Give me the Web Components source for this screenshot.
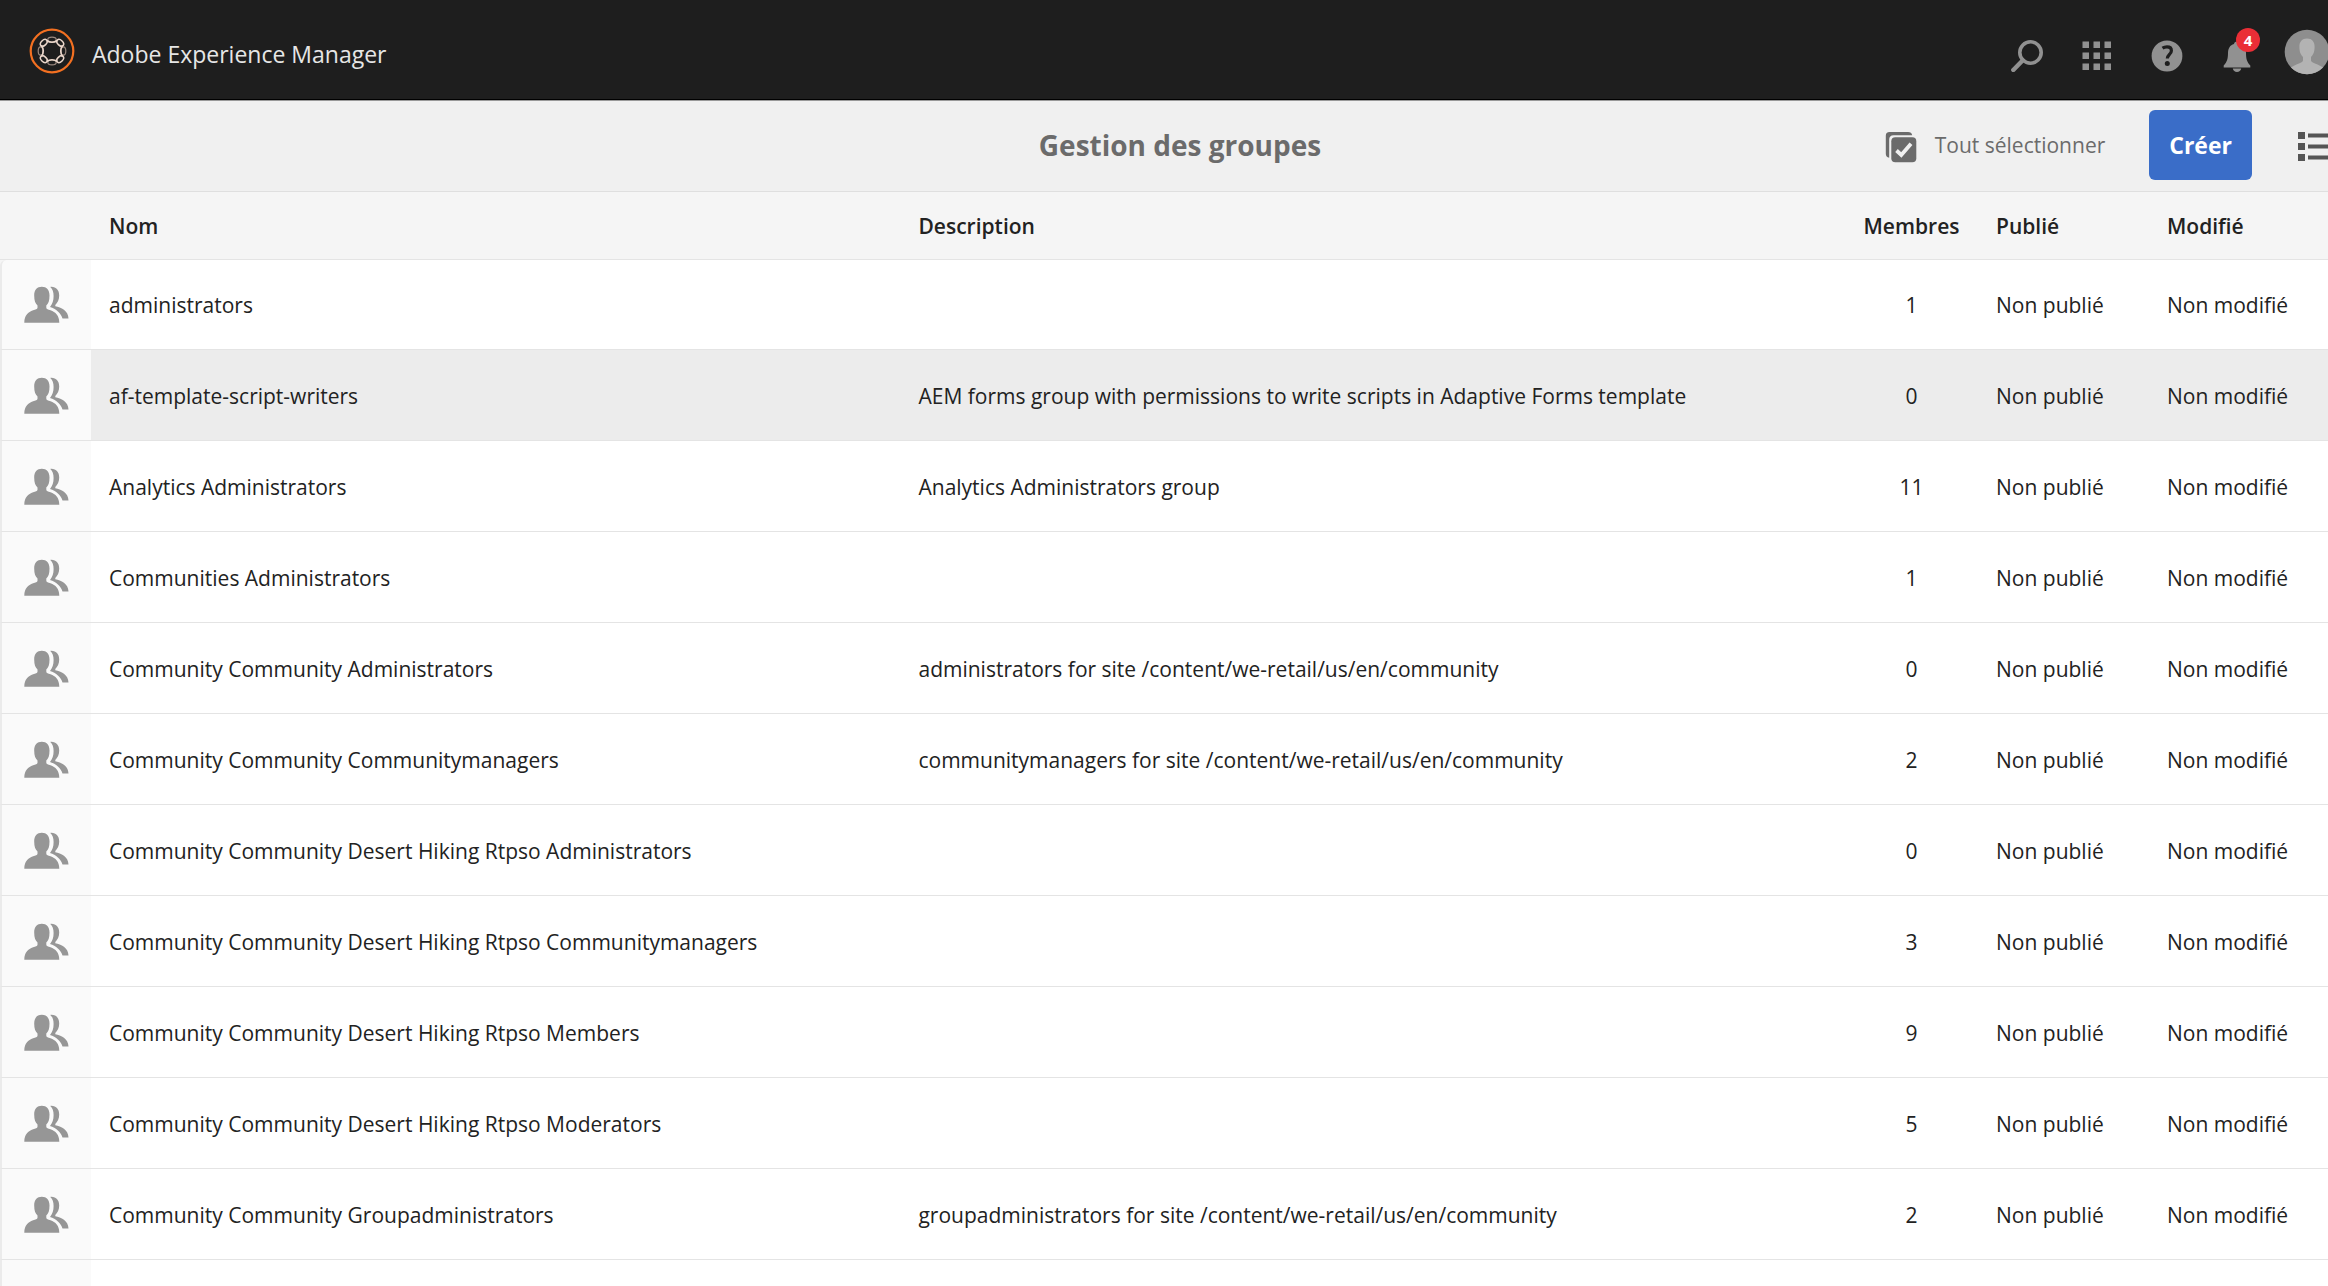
<!DOCTYPE html>
<html lang="fr">
<head>
<meta charset="utf-8">
<title>Gestion des groupes</title>
<style>
html, body { margin: 0; height: 100%; overflow: hidden; background: #fff; }
body { font-family: "Open Sans", "Noto Sans", sans-serif; font-size: 21px; color: #222; }
</style>
</head>
<body>
<aem-console></aem-console>
<script>
const define = (name, html, setup) => {
  const tpl = document.createElement('template');
  tpl.innerHTML = html;
  customElements.define(name, class extends HTMLElement {
    constructor() {
      super();
      this.attachShadow({ mode: 'open' }).append(tpl.content.cloneNode(true));
    }
    connectedCallback() {
      if (setup && !this.ready) { this.ready = true; setup(this.shadowRoot, this); }
    }
  });
};

const ring = Array.from({ length: 4 }, (_, i) => `<g transform="rotate(${i * 90} 24 24)">
<ellipse cx="24" cy="12.6" rx="4.2" ry="2.4" stroke="#9c8a80" stroke-width="1.2"/>
<ellipse cx="32.200" cy="15.800" rx="4" ry="2.600" transform="rotate(45 32.2 15.8)" stroke="#ead6ca" stroke-width="1.5"/>
<path d="M18.500 13.500Q24 17 29.500 13.500" stroke="#ead6ca" stroke-width="1.600"/></g>`).join('');

const icons = {
  logo: [48, 48, `<g fill="none"><circle cx="24" cy="24" r="21.3" stroke="#f37021" stroke-width="2.2"/>${ring}</g>`],
  search: [32, 32, `<g fill="none" stroke="currentColor"><circle cx="19.500" cy="12.500" r="10.700" stroke-width="3.600"/><path d="M11.800 20.300L2.300 30" stroke-width="4.400" stroke-linecap="round"/></g>`],
  grid: [30, 30, [0, 11, 22].map(y => [0, 11, 22].map(x => `<rect x="${x + .5}" y="${y + .5}" width="6.500" height="6.500"/>`).join('')).join('')],
  help: [32, 32, `<circle cx="16" cy="16" r="15.400"/><g stroke="#1e1e1e" fill="none"><path d="M11.500 8.200C13 7.200 14.500 6.900 16 6.900C19 6.900 20.400 8.600 20.400 10.700C20.400 14.200 16.300 14.600 16.300 18.600" stroke-width="3.200"/></g><circle cx="16.300" cy="23.600" r="2.500" fill="#1e1e1e"/>`],
  bell: [28, 32, `<path d="M14 1.500C15.800 1.500 16.800 2.600 17 4C21 5 23 8.500 23 13C23 19 24 22 27.300 25.500V27.400H.700V25.500C4 22 5 19 5 13C5 8.500 7 5 11 4C11.200 2.600 12.200 1.500 14 1.500ZM9.800 28.600H18.200C17.800 31 16.200 32 14 32S10.200 31 9.800 28.600Z"/>`],
  avatar: [46, 46, `<circle cx="23" cy="23" r="22.300" fill="#8e8e8e"/><path d="M23 9.500C28 9.500 30.600 12.800 30.600 17.500C30.600 21 30.200 25 27 28V31.500C27.300 34.500 35 35 39 38.600A22.300 22.300 0 0 1 7 38.600C11 35 18.700 34.500 19 31.500V28C15.800 25 15.400 21 15.400 17.500C15.400 12.800 18 9.500 23 9.500Z" fill="#b3b3b3"/>`],
  select: [32, 32, `<path d="M4.500 1H23C25.500 1 26.800 2.200 27.200 4.200H8.500C5.600 4.200 4.200 5.800 4.200 8.500V26.800C2 26.400 .800 25 .800 22.800V4.700C.800 2.300 2.100 1 4.500 1Z"/><rect x="6.300" y="6.300" width="25" height="25" rx="4"/><path d="M11.500 19.500L16.300 24L26 12.800" stroke="#f0f0f0" stroke-width="3.800" fill="none"/>`],
  list: [46, 32, [1, 12, 23].map(y => `<rect x="2" y="${y}" width="7" height="7"/><rect x="12" y="${y + 1.500}" width="34" height="4"/>`).join('')],
  users: [46, 38, `<path d="M17.800 .8C22.600 .8 25.500 4 25.500 9.500C25.500 14.500 24.500 17.500 22.300 19.500V21.800C22.500 23.300 24 23.500 26.500 24.300C31.500 26 35.300 29.500 35.300 36.700H.300C.300 29.500 4.100 26 9.100 24.300C11.600 23.500 13.300 23.300 13.500 21.800V19.500C11.300 17.500 10.200 14.500 10.200 9.500C10.200 4 13 .8 17.800 .8Z"/><path d="M26.300 .9C32 .4 35.200 4 35.200 9.500C35.200 14 33.600 16.500 31.300 19V20.300C37 21.500 44.300 24.500 44.500 32.500H38.500C37 27 32 23 26 21C28.500 17.500 29.600 14.500 29.600 10C29.600 6 28.600 3 26.300 .9Z"/>`],
};

define('aem-icon', `<style>:host{display:inline-flex;flex:none}svg{display:block}</style>`, (root, el) => {
  const [w, h, body] = icons[el.getAttribute('name')];
  root.innerHTML += `<svg width="${w}" height="${h}" viewBox="0 0 ${w} ${h}" fill="currentColor" aria-hidden="true">${body}</svg>`;
});

define('aem-header', `
<style>
:host{display:flex;align-items:center;height:100px;padding:2px 18px 0 28px;box-sizing:border-box;background:#1e1e1e;border-bottom:1px solid #000;box-shadow:0 1px 0 #999;position:relative}
a{display:flex;align-items:center;gap:16px;color:#e6e6e6;text-decoration:none;font-size:23px;line-height:32px}
a span{padding-top:6px}
nav{display:flex;margin-left:auto}
button{display:flex;align-items:center;justify-content:center;width:70px;height:70px;padding:10px 0 0;border:0;background:none;color:#919191;font:inherit}
button:last-child{padding:2px 0 0}
.bell{position:relative}
.bell b{position:absolute;left:34px;top:12px;width:24px;height:24px;border-radius:12px;background:#ea2e36;color:#fff;font-size:15px;line-height:24px;text-align:center}
</style>
<a href="#"><aem-icon name="logo"></aem-icon><span>Adobe Experience Manager</span></a>
<nav>
<button aria-label="Rechercher"><aem-icon name="search"></aem-icon></button>
<button aria-label="Solutions"><aem-icon name="grid"></aem-icon></button>
<button aria-label="Aide"><aem-icon name="help"></aem-icon></button>
<button class="bell" aria-label="Notifications"><aem-icon name="bell"></aem-icon><b>4</b></button>
<button aria-label="Utilisateur"><aem-icon name="avatar"></aem-icon></button>
</nav>`);

define('aem-toolbar', `
<style>
:host{display:grid;grid-template-columns:1fr auto 1fr;align-items:center;height:92px;padding-bottom:2px;background:#f0f0f0;border-bottom:1px solid #dfdfdf;box-sizing:border-box}
h1{grid-column:2;margin:0;font-size:28px;line-height:36px;font-weight:700;color:#6b6b6b}
div{display:flex;align-items:center;justify-content:flex-end;padding-right:18px}
button{font:inherit;border:0;background:none;padding:0;color:#6b6b6b;display:flex;align-items:center}
aem-icon{padding-top:4px}
.all{gap:18px;margin-right:44px}
.new{height:70px;padding:0 20px;border-radius:6px;background:#3a6dc8;color:#fff;font-size:23px;font-weight:700;margin-right:44px}
.view{color:#555}
</style>
<h1><slot></slot></h1>
<div>
<button class="all"><aem-icon name="select"></aem-icon>Tout sélectionner</button>
<button class="new">Créer</button>
<button class="view" aria-label="Affichage"><aem-icon name="list"></aem-icon></button>
</div>`);

const groups = [
  ['administrators', '', 1],
  ['af-template-script-writers', 'AEM forms group with permissions to write scripts in Adaptive Forms template', 0],
  ['Analytics Administrators', 'Analytics Administrators group', 11],
  ['Communities Administrators', '', 1],
  ['Community Community Administrators', 'administrators for site /content/we-retail/us/en/community', 0],
  ['Community Community Communitymanagers', 'communitymanagers for site /content/we-retail/us/en/community', 2],
  ['Community Community Desert Hiking Rtpso Administrators', '', 0],
  ['Community Community Desert Hiking Rtpso Communitymanagers', '', 3],
  ['Community Community Desert Hiking Rtpso Members', '', 9],
  ['Community Community Desert Hiking Rtpso Moderators', '', 5],
  ['Community Community Groupadministrators', 'groupadministrators for site /content/we-retail/us/en/community', 2],
];

define('aem-group-table', `
<style>
:host{display:block;background:#f5f5f5}
table{width:100%;table-layout:fixed;border-collapse:separate;border-spacing:0}
th,td{box-sizing:border-box;padding:1px 18px 0;text-align:left;line-height:28px;white-space:nowrap;border-bottom:1px solid #e4e4e4}
th{height:68px;font-weight:600}
td{height:91px;background:#fff}
tbody tr:first-child td{height:90px}
.pic{width:91px;padding:0}
td.pic{background:#fafafa;border-left:2px solid #ebebeb;color:#969696;padding:1px 0 0 22px}
td aem-icon{vertical-align:middle}
.name{width:34.3%}
.num{width:133px;text-align:center}
.pub{width:171px}
.mod{width:211px}
tr:first-child td.pic{border-top-left-radius:6px}
tr.hover td:not(.pic){background:#ececec}
</style>
<table>
<thead><tr><th class="pic"></th><th class="name">Nom</th><th>Description</th><th class="num">Membres</th><th class="pub">Publié</th><th class="mod">Modifié</th></tr></thead>
<tbody></tbody>
</table>`, root => {
  const row = (name, desc, members, i) => `<tr${i === 1 ? ' class="hover"' : ''}><td class="pic"><aem-icon name="users"></aem-icon></td><td>${name}</td><td>${desc}</td><td class="num">${members}</td><td>Non publié</td><td>Non modifié</td></tr>`;
  root.querySelector('tbody').innerHTML = groups.map((g, i) => row(...g, i)).join('')
    + '<tr><td class="pic"></td><td></td><td></td><td></td><td></td><td></td></tr>';
});

define('aem-console', `
<style>:host{display:block;width:calc(100% + 32px);height:100vh;overflow:hidden}</style>
<aem-header></aem-header>
<main>
<aem-toolbar>Gestion des groupes</aem-toolbar>
<aem-group-table></aem-group-table>
</main>`);
</script>
</body>
</html>
